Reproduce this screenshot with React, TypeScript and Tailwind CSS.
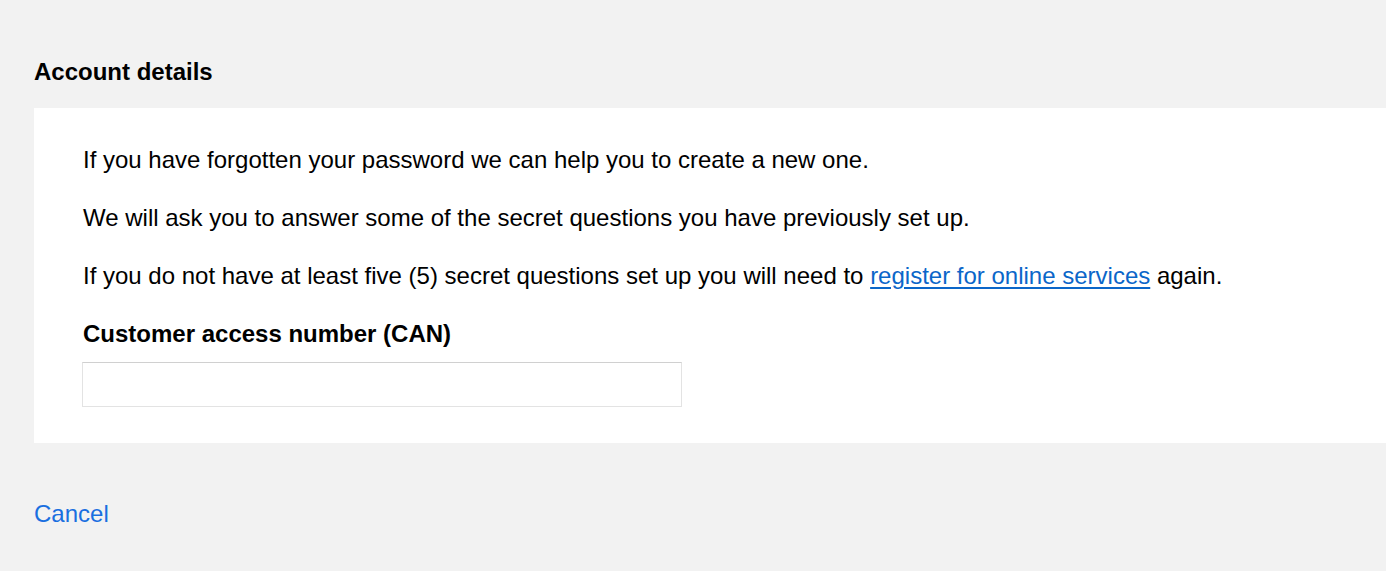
export default function App() {
  return (
    <div className="min-h-screen bg-[#f2f2f2] pt-[58px] pl-[34px] font-['Liberation_Sans',Arial,sans-serif] text-black">
      <h2 className="text-[24px] leading-[28px] font-bold">Account details</h2>
      <div className="mt-[22px] bg-white pl-[49px] pr-8 pt-[38px] pb-[36px]">
        <p className="text-[24px] leading-[28px]">
          If you have forgotten your password we can help you to create a new one.
        </p>
        <p className="mt-[30px] text-[24px] leading-[28px]">
          We will ask you to answer some of the secret questions you have previously set up.
        </p>
        <p className="mt-[30px] text-[24px] leading-[28px]">
          If you do not have at least five (5) secret questions set up you will need to{" "}
          <a href="#" className="text-[#0b66c9] underline underline-offset-[3px]">
            register for online services
          </a>{" "}
          again.
        </p>
        <label htmlFor="can" className="mt-[30px] block text-[24px] leading-[28px] font-bold">
          Customer access number (CAN)
        </label>
        <input
          id="can"
          type="text"
          className="-ml-px mt-[14px] block h-[45px] w-[600px] border border-[#e3e3e3] border-t-[#d0d0d0] bg-white px-3 outline-none"
        />
      </div>
      <a href="#" className="mt-[57px] inline-block text-[24px] leading-[28px] text-[#1a6fe0]">
        Cancel
      </a>
    </div>
  );
}
